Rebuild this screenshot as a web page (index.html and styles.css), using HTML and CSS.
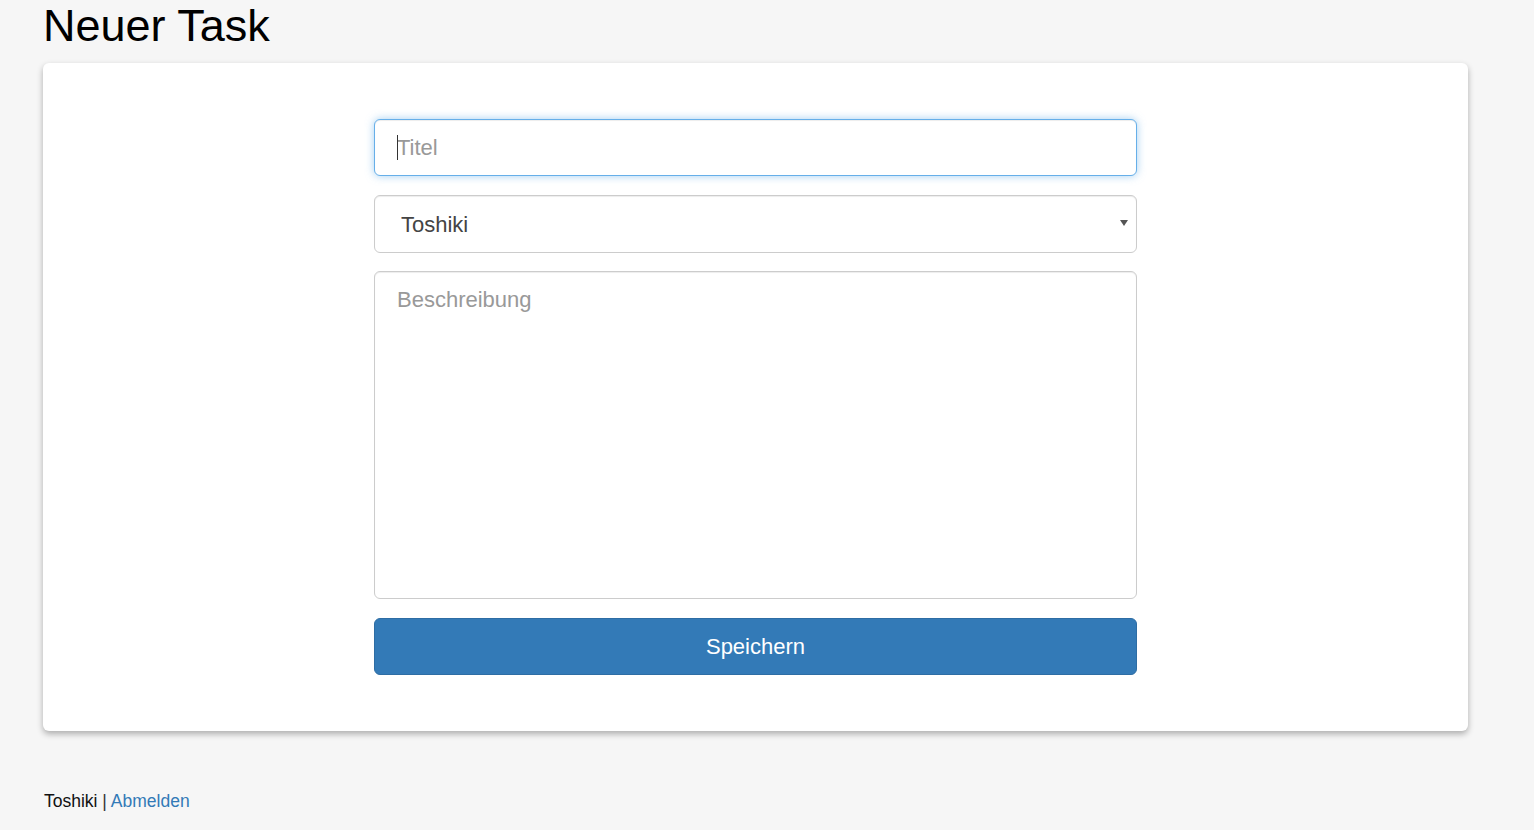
FILE: index.html
```html
<!DOCTYPE html>
<html lang="de">
<head>
<meta charset="utf-8">
<title>Neuer Task</title>
<link rel="stylesheet" href="styles.css">
</head>
<body>
<div class="page">
  <h1 class="title">Neuer Task</h1>
  <div class="card">
    <form class="task-form">
      <div class="input-wrap">
        <input class="field field-input is-focused" type="text" placeholder="Titel">
        <span class="caret"></span>
      </div>
      <div class="select-wrap">
        <select class="field field-select">
          <option>Toshiki</option>
        </select>
      </div>
      <textarea class="field field-textarea" placeholder="Beschreibung"></textarea>
      <button type="button" class="btn-save">Speichern</button>
    </form>
  </div>
  <div class="footer">
    <span class="user">Toshiki</span> | <a class="logout" href="#">Abmelden</a>
  </div>
</div>
</body>
</html>
```

FILE: styles.css
```css
html, body {
  margin: 0;
  padding: 0;
  background: #f6f6f6;
  font-family: "Liberation Sans", Arial, sans-serif;
  color: #333;
}

.page {
  padding: 0 66px 0 43px;
}

.title {
  margin: 0;
  font-size: 45px;
  font-weight: normal;
  line-height: 52px;
  color: #000;
}

.card {
  margin-top: 11px;
  background: #fff;
  border-radius: 6px;
  box-shadow: 0 3px 6px rgba(0, 0, 0, 0.3);
  padding: 56px 0;
}

.task-form {
  width: 763px;
  margin: 0 auto;
  display: flex;
  flex-direction: column;
}

.input-wrap {
  position: relative;
  margin-bottom: 19px;
}

.caret {
  position: absolute;
  left: 23px;
  top: 16px;
  width: 1px;
  height: 25px;
  background: #333;
}

.field {
  box-sizing: border-box;
  width: 100%;
  border: 1px solid #ccc;
  border-radius: 6px;
  background: #fff;
  font-family: "Liberation Sans", Arial, sans-serif;
  font-size: 22px;
  color: #555;
  padding: 11px 22px;
  margin: 0;
  outline: none;
  box-shadow: inset 0 1px 1px rgba(0, 0, 0, 0.075);
  display: block;
}

.field::placeholder {
  color: #999;
}

.field-input {
  height: 57px;
}

.field-input.is-focused {
  border-color: #66afe9;
  box-shadow: inset 0 1px 1px rgba(0, 0, 0, 0.075), 0 0 8px rgba(102, 175, 233, 0.6);
}

.select-wrap {
  position: relative;
  margin-bottom: 18px;
}

.select-wrap::after {
  content: "";
  position: absolute;
  right: 9px;
  top: 25px;
  border-left: 4px solid transparent;
  border-right: 4px solid transparent;
  border-top: 6px solid #555;
  pointer-events: none;
}

.field-select {
  -webkit-appearance: none;
  appearance: none;
  height: 58px;
  padding-left: 26px;
  color: #444;
}

.field-textarea {
  height: 328px;
  resize: none;
  line-height: 1.42857;
  padding-top: 12px;
  margin-bottom: 19px;
}

.btn-save {
  height: 57px;
  border: 1px solid #2e6da4;
  border-radius: 6px;
  background: #337ab7;
  color: #fff;
  font-family: "Liberation Sans", Arial, sans-serif;
  font-size: 22px;
  cursor: pointer;
  margin: 0;
}

.footer {
  margin-top: 59px;
  font-size: 17.5px;
  line-height: 22px;
  color: #333;
  padding-left: 1px;
}

.user {
  color: #111;
}

.logout {
  color: #337ab7;
  text-decoration: none;
}
```
